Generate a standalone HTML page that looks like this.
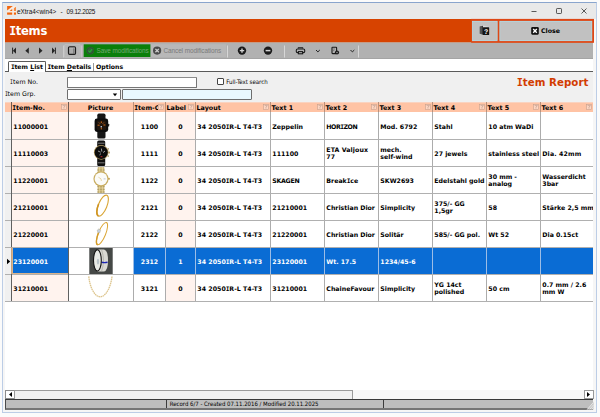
<!DOCTYPE html>
<html><head><meta charset="utf-8"><title>eXtra4 Items</title>
<style>
html,body{margin:0;padding:0}
body{width:600px;height:417px;background:#fbfbfb;position:relative;overflow:hidden;font-family:"DejaVu Sans","Liberation Sans",sans-serif;font-size:6.25px;color:#000}
div,svg{position:absolute;box-sizing:border-box}
.b{font-weight:bold}
u{text-decoration-thickness:0.5px;text-underline-offset:0.6px}
.tx{white-space:nowrap;line-height:8px}
.cell{overflow:hidden}
.cell .tx{font-weight:bold;line-height:7px}
.I{font-family:"DejaVu Sans Mono","Liberation Mono",monospace;margin:0 -0.034em 0 -0.022em}
.J{font-family:"DejaVu Sans Mono","Liberation Mono",monospace;display:inline-block;transform:scaleX(0.75);transform-origin:0 0;margin:0 -0.17em 0 -0.02em}
.seg{font-family:"Liberation Sans","DejaVu Sans",sans-serif}
.tah{font-family:"DejaVu Sans Condensed","DejaVu Sans","Liberation Sans",sans-serif}
</style></head><body>

<div style="left:2px;top:2px;width:595px;height:411px;border:1px solid #bccde6;border-top-color:#8aa5cd;background:#f6f6f6"></div>
<div style="left:3px;top:3px;width:593px;height:16px;background:#e9e9e9"></div>
<svg style="left:6.6px;top:6.2px" width="9.2" height="8.8" viewBox="0 0 9.2 8.8"><rect width="9.2" height="8.8" rx="0.5" fill="#f6ece4"/><path d="M0.1 0.1 H5.8 L0.1 4.6 Z" fill="#f2650e"/><path d="M2.6 5 L5.2 2.9 V5 Z" fill="#f2650e"/><path d="M6.9 2.2 L9.1 0.6 V5 H6.9 Z" fill="#f58a42"/><rect x="0.1" y="6.5" width="5.1" height="2.2" fill="#f2650e"/><rect x="6.9" y="6.5" width="2.2" height="2.2" fill="#f2650e"/></svg>
<div class="tx seg" style="left:17px;top:7.7px;font-size:6.35px;letter-spacing:0.01px;color:#111">eXtra4&lt;win4&gt;</div>
<div class="tx seg" style="left:60.6px;top:7.7px;font-size:6.35px;color:#111">-</div>
<div class="tx seg" style="left:66.6px;top:7.7px;font-size:6.35px;letter-spacing:-0.34px;color:#111">09.12.2025</div>
<svg style="left:525px;top:5px" width="70" height="12" viewBox="0 0 70 12"><path d="M6.5 6.5 H11.5" stroke="#333" stroke-width="0.8" fill="none"/><rect x="31.5" y="3.5" width="5" height="5" rx="0.7" stroke="#333" stroke-width="0.8" fill="none"/><path d="M56.5 3.5 L61.5 8.5 M61.5 3.5 L56.5 8.5" stroke="#333" stroke-width="0.8" fill="none"/></svg>
<div style="left:5px;top:19px;width:588px;height:23px;background:#d74300"></div>
<div style="left:5px;top:42px;width:588px;height:1px;background:#c59c87"></div>
<div class="tx b" style="left:9.6px;top:23px;font-size:11.6px;line-height:17px;color:#fff;letter-spacing:-0.25px"><span class="I">I</span>tems</div>
<svg style="left:470px;top:18px" width="125" height="26" viewBox="470 18 125 26"><rect x="471.2" y="18.9" width="122.8" height="23.9" fill="#de4716"/><rect x="472.1" y="20.9" width="25.4" height="20.2" fill="#c1c1c1"/><rect x="499.5" y="20.9" width="92.7" height="20.2" fill="#c1c1c1"/><rect x="472.5" y="21.3" width="24.6" height="19.4" fill="none" stroke="#a9e2f0" stroke-width="0.5"/><rect x="499.9" y="21.3" width="91.9" height="19.4" fill="none" stroke="#a9e2f0" stroke-width="0.5"/></svg>
<svg style="left:479px;top:25px" width="11" height="11" viewBox="0 0 11 11"><path d="M0.5 1.5 L3.8 0.6 L10.4 1.9 V10 L3.9 10.3 L0.5 9 Z" fill="#d8d8d8"/><path d="M0.7 1.6 L4 0.8 V9.8 L0.7 8.8 Z" fill="#2e2e2e"/><path d="M1.7 1.5 V9 M2.8 1.2 V9.4" stroke="#9a9a9a" stroke-width="0.4"/><rect x="3.8" y="2.2" width="6.4" height="7.8" rx="0.5" fill="#141414"/><text x="7" y="8.7" font-size="6.8" font-weight="bold" fill="#fff" text-anchor="middle" font-family="Liberation Sans, sans-serif" style="text-rendering:geometricPrecision">?</text></svg>
<svg style="left:531px;top:27px" width="8" height="8" viewBox="0 0 8 8"><rect x="0.2" y="0.1" width="7.6" height="7.6" rx="1.1" fill="#111"/><path d="M2.2 2.1 L5.8 5.7 M5.8 2.1 L2.2 5.7" stroke="#fff" stroke-width="1.4"/></svg>
<div class="tx b" style="left:541px;top:27.3px;font-size:6.3px">Close</div>
<div style="left:5px;top:43px;width:588px;height:15.5px;background:#b1b1b1;border-bottom:1px solid #a4a4a4"></div>
<svg style="left:5px;top:43px" width="370" height="16" viewBox="0 0 370 16"><g fill="#262626"><rect x="7.1" y="4.6" width="1" height="6.2"/><path d="M11 4.6 V10.8 L7.9 7.7 Z"/><path d="M23.8 4.6 V10.8 L20.3 7.7 Z"/><path d="M34 4.6 V10.8 L37.5 7.7 Z"/><path d="M47 4.6 V10.8 L50.1 7.7 Z"/><rect x="49.9" y="4.6" width="1" height="6.2"/></g><rect x="58.4" y="2.5" width="0.8" height="12" fill="#dcdcdc"/><rect x="59.6" y="1.6" width="15.6" height="12.6" rx="0.8" fill="#b6b6b6" stroke="#c8c8c8" stroke-width="0.5"/><rect x="63.5" y="3.9" width="7" height="7.4" rx="1.1" fill="#a9a9a9" stroke="#1c1c1c" stroke-width="1.2"/><path d="M68.7 4.6 V10.8" stroke="#555" stroke-width="0.6"/><path d="M64.2 5 H70" stroke="#c4c4c4" stroke-width="0.6"/><rect x="76.3" y="2.5" width="0.9" height="12" fill="#d8c4d8"/><rect x="78.7" y="1.3" width="66.7" height="12.7" fill="#0a7f0a"/><circle cx="85.2" cy="7.6" r="3.9" fill="#33633a"/><circle cx="85.2" cy="7.6" r="3.1" fill="none" stroke="#2a5230" stroke-width="0.8"/><path d="M83.4 7.7 L84.8 9.1 L87.1 6.2" stroke="#22a832" stroke-width="1.2" fill="none"/><rect x="146" y="1.3" width="75" height="12.7" fill="#b8b8b8"/><circle cx="152.1" cy="7.6" r="4.1" fill="#4a4a4a"/><path d="M150.4 5.9 L153.8 9.3 M153.8 5.9 L150.4 9.3" stroke="#cfcfcf" stroke-width="1.3"/><rect x="222" y="2.5" width="0.9" height="12" fill="#dcdcdc"/><circle cx="237" cy="7.6" r="4.2" fill="#1a1a1a"/><path d="M234.8 7.6 H239.2 M237 5.4 V9.8" stroke="#d4d4d4" stroke-width="1.4"/><circle cx="263" cy="7.6" r="4.2" fill="#1a1a1a"/><path d="M260.6 7.6 H265.4" stroke="#d4d4d4" stroke-width="1.5"/><rect x="279" y="2.5" width="0.9" height="12" fill="#dcdcdc"/><g fill="none" stroke="#1a1a1a" stroke-width="1.1"><rect x="291.3" y="6" width="8.4" height="3.6" rx="1.2"/><path d="M293.4 5.6 V4.7 H297.6 V5.6"/><rect x="293.4" y="8.6" width="4.2" height="2.2" fill="#b1b1b1"/></g><path d="M311 7 L312.9 8.9 L314.8 7" stroke="#222" stroke-width="1" fill="none"/><rect x="327" y="4.2" width="4.6" height="6.4" rx="0.6" fill="none" stroke="#1a1a1a" stroke-width="1.1"/><path d="M328.4 6 H329.6 M328.4 7.6 H329.2" stroke="#1a1a1a" stroke-width="0.6"/><circle cx="332" cy="9.5" r="2.1" fill="#1a1a1a"/><circle cx="332" cy="9.5" r="0.7" fill="#b1b1b1"/><path d="M345.5 7 L347.4 8.9 L349.3 7" stroke="#222" stroke-width="1" fill="none"/><rect x="353" y="2.5" width="0.9" height="12" fill="#dcdcdc"/></svg>
<div class="tx seg" style="left:96.6px;top:47.2px;font-size:6.4px;color:#74a874;letter-spacing:-0.09px">Save modifications</div>
<div class="tx seg" style="left:163.5px;top:47.2px;font-size:6.4px;color:#7a7a7a;letter-spacing:-0.07px">Cancel modifications</div>
<div style="left:5px;top:59px;width:588px;height:13px;background:#fff"></div>
<div style="left:5px;top:72px;width:588px;height:31px;background:#f0f0f0"></div>
<div style="left:45px;top:71px;width:548px;height:1px;background:#5a5a5a"></div>
<div style="left:5px;top:71px;width:4px;height:1px;background:#5a5a5a"></div>
<div style="left:8px;top:60.6px;width:38px;height:11.4px;background:#fff;border:1px solid #5a5a5a;border-bottom:none;border-radius:1.5px 1.5px 0 0"></div>
<div class="tx b" style="left:11px;top:63px;font-size:6.2px"><span class="I">I</span>tem <u>L</u>ist</div>
<div class="tx b" style="left:47.7px;top:63px;font-size:6.2px"><span class="I">I</span>tem <u>D</u>etails</div>
<div style="left:93px;top:63px;width:1px;height:8px;background:#999"></div>
<div class="tx b" style="left:96px;top:63px;font-size:6.2px">Options</div>
<div class="tx" style="left:10.5px;top:78.3px;font-size:6.3px;color:#000"><span class="J">I</span>tem No.</div>
<div class="tx" style="left:5px;top:89.5px;font-size:6.3px;color:#000"><span class="J">I</span>tem Grp.</div>
<div style="left:67px;top:77px;width:130px;height:11px;background:#fff;border:1px solid #767676;border-top-color:#8c8c8c;border-radius:1px"></div>
<div style="left:67px;top:89px;width:54px;height:10.5px;background:#fff;border:1px solid #6e6e6e;border-radius:1px"></div>
<svg style="left:112px;top:93px" width="6" height="4" viewBox="0 0 6 4"><path d="M0.8 0.6 H5.2 L3 3.2 Z" fill="#000"/></svg>
<div style="left:122px;top:89px;width:130px;height:10.5px;background:#e9f8fe;border:1px solid #6e6e6e;border-radius:1px"></div>
<div style="left:217px;top:78px;width:7px;height:7px;background:#fff;border:1px solid #444;border-radius:1px"></div>
<div class="tx tah" style="left:226.3px;top:77.7px;font-size:6.05px;color:#000">Full-Text search</div>
<div class="tx b" style="left:517px;top:74.2px;font-size:10.25px;line-height:16px;color:#d23c00;letter-spacing:0.06px"><span class="I">I</span>tem Report</div>
<div style="left:5px;top:102px;width:588px;height:288px;background:#fff"></div>
<div style="left:5px;top:102px;width:588px;height:10px;background:#ffc3a4;border-top:1px solid #fad3c0"></div>
<div style="left:5px;top:112px;width:6px;height:189px;background:#f0f0f0"></div>
<div style="left:11px;top:112px;width:57px;height:189px;background:#fff3ee"></div>
<div style="left:165px;top:112px;width:30px;height:189px;background:#fff3ee"></div>
<div style="left:12px;top:247px;width:581px;height:27px;background:#0a6cd4"></div>
<div style="left:69px;top:247px;width:64px;height:27px;background:#fff"></div>
<div style="left:12px;top:247px;width:57px;height:27px;border:0.7px solid #d9b38c"></div>
<div style="left:11px;top:112px;width:1px;height:189px;background:#606060"></div>
<div style="left:11px;top:102px;width:1px;height:10px;background:#6b5a52"></div>
<div style="left:68px;top:112px;width:1px;height:189px;background:#606060"></div>
<div style="left:68px;top:102px;width:1px;height:10px;background:#6b5a52"></div>
<div style="left:133px;top:112px;width:1px;height:189px;background:#acacac"></div>
<div style="left:133px;top:102px;width:1px;height:10px;background:#b8917c"></div>
<div style="left:165px;top:112px;width:1px;height:189px;background:#acacac"></div>
<div style="left:165px;top:102px;width:1px;height:10px;background:#b8917c"></div>
<div style="left:195px;top:112px;width:1px;height:189px;background:#acacac"></div>
<div style="left:195px;top:102px;width:1px;height:10px;background:#b8917c"></div>
<div style="left:270px;top:112px;width:1px;height:189px;background:#acacac"></div>
<div style="left:270px;top:102px;width:1px;height:10px;background:#b8917c"></div>
<div style="left:324px;top:112px;width:1px;height:189px;background:#acacac"></div>
<div style="left:324px;top:102px;width:1px;height:10px;background:#b8917c"></div>
<div style="left:378px;top:112px;width:1px;height:189px;background:#acacac"></div>
<div style="left:378px;top:102px;width:1px;height:10px;background:#b8917c"></div>
<div style="left:432px;top:112px;width:1px;height:189px;background:#acacac"></div>
<div style="left:432px;top:102px;width:1px;height:10px;background:#b8917c"></div>
<div style="left:486px;top:112px;width:1px;height:189px;background:#acacac"></div>
<div style="left:486px;top:102px;width:1px;height:10px;background:#b8917c"></div>
<div style="left:540px;top:112px;width:1px;height:189px;background:#acacac"></div>
<div style="left:540px;top:102px;width:1px;height:10px;background:#b8917c"></div>
<div style="left:5px;top:139px;width:588px;height:1px;background:#b0b0b0"></div>
<div style="left:5px;top:166px;width:588px;height:1px;background:#b0b0b0"></div>
<div style="left:5px;top:193px;width:588px;height:1px;background:#b0b0b0"></div>
<div style="left:5px;top:220px;width:588px;height:1px;background:#b0b0b0"></div>
<div style="left:5px;top:247px;width:588px;height:1px;background:#b0b0b0"></div>
<div style="left:5px;top:274px;width:588px;height:1px;background:#b0b0b0"></div>
<div style="left:5px;top:301px;width:588px;height:1px;background:#b0b0b0"></div>
<div style="left:11px;top:112px;width:1px;height:189px;background:#606060"></div>
<div style="left:68px;top:112px;width:1px;height:189px;background:#606060"></div>
<div style="left:133px;top:248px;width:1px;height:26px;background:#9cbde6"></div>
<div style="left:165px;top:248px;width:1px;height:26px;background:#9cbde6"></div>
<div style="left:195px;top:248px;width:1px;height:26px;background:#9cbde6"></div>
<div style="left:270px;top:248px;width:1px;height:26px;background:#9cbde6"></div>
<div style="left:324px;top:248px;width:1px;height:26px;background:#9cbde6"></div>
<div style="left:378px;top:248px;width:1px;height:26px;background:#9cbde6"></div>
<div style="left:432px;top:248px;width:1px;height:26px;background:#9cbde6"></div>
<div style="left:486px;top:248px;width:1px;height:26px;background:#9cbde6"></div>
<div style="left:540px;top:248px;width:1px;height:26px;background:#9cbde6"></div>
<div style="left:11px;top:247px;width:1px;height:27px;background:#c9a27e"></div>
<div class="cell" style="left:12px;top:102px;width:49px;height:10px"><div class="tx b" style="left:0.5px;top:1.5px;font-size:6.4px;line-height:8px"><span class="I">I</span>tem-No.</div></div>
<svg style="left:61px;top:103.5px" width="6" height="6" viewBox="0 0 6 6"><rect x="0.4" y="0.4" width="5.2" height="5.2" fill="#ffd6c2" stroke="#c9a08c" stroke-width="0.6"/><path d="M1.6 1.6 H4.4 L3 3.2 V4.6" stroke="#b29486" stroke-width="0.6" fill="none"/></svg>
<div class="tx b" style="left:68px;width:65px;top:104px;text-align:center;font-size:6.3px">Picture</div>
<div class="cell" style="left:134px;top:102px;width:24px;height:10px"><div class="tx b" style="left:0.5px;top:1.5px;font-size:6.4px;line-height:8px"><span class="I">I</span>tem-C</div></div>
<svg style="left:158px;top:103.5px" width="6" height="6" viewBox="0 0 6 6"><rect x="0.4" y="0.4" width="5.2" height="5.2" fill="#ffd6c2" stroke="#c9a08c" stroke-width="0.6"/><path d="M1.6 1.6 H4.4 L3 3.2 V4.6" stroke="#b29486" stroke-width="0.6" fill="none"/></svg>
<div class="cell" style="left:166px;top:102px;width:22px;height:10px"><div class="tx b" style="left:0.5px;top:1.5px;font-size:6.4px;line-height:8px">Label</div></div>
<svg style="left:188px;top:103.5px" width="6" height="6" viewBox="0 0 6 6"><rect x="0.4" y="0.4" width="5.2" height="5.2" fill="#ffd6c2" stroke="#c9a08c" stroke-width="0.6"/><path d="M1.6 1.6 H4.4 L3 3.2 V4.6" stroke="#b29486" stroke-width="0.6" fill="none"/></svg>
<div class="cell" style="left:196px;top:102px;width:67px;height:10px"><div class="tx b" style="left:0.5px;top:1.5px;font-size:6.4px;line-height:8px">Layout</div></div>
<svg style="left:263px;top:103.5px" width="6" height="6" viewBox="0 0 6 6"><rect x="0.4" y="0.4" width="5.2" height="5.2" fill="#ffd6c2" stroke="#c9a08c" stroke-width="0.6"/><path d="M1.6 1.6 H4.4 L3 3.2 V4.6" stroke="#b29486" stroke-width="0.6" fill="none"/></svg>
<div class="cell" style="left:271px;top:102px;width:46px;height:10px"><div class="tx b" style="left:0.5px;top:1.5px;font-size:6.4px;line-height:8px">Text 1</div></div>
<svg style="left:317px;top:103.5px" width="6" height="6" viewBox="0 0 6 6"><rect x="0.4" y="0.4" width="5.2" height="5.2" fill="#ffd6c2" stroke="#c9a08c" stroke-width="0.6"/><path d="M1.6 1.6 H4.4 L3 3.2 V4.6" stroke="#b29486" stroke-width="0.6" fill="none"/></svg>
<div class="cell" style="left:325px;top:102px;width:46px;height:10px"><div class="tx b" style="left:0.5px;top:1.5px;font-size:6.4px;line-height:8px">Text 2</div></div>
<svg style="left:371px;top:103.5px" width="6" height="6" viewBox="0 0 6 6"><rect x="0.4" y="0.4" width="5.2" height="5.2" fill="#ffd6c2" stroke="#c9a08c" stroke-width="0.6"/><path d="M1.6 1.6 H4.4 L3 3.2 V4.6" stroke="#b29486" stroke-width="0.6" fill="none"/></svg>
<div class="cell" style="left:379px;top:102px;width:46px;height:10px"><div class="tx b" style="left:0.5px;top:1.5px;font-size:6.4px;line-height:8px">Text 3</div></div>
<svg style="left:425px;top:103.5px" width="6" height="6" viewBox="0 0 6 6"><rect x="0.4" y="0.4" width="5.2" height="5.2" fill="#ffd6c2" stroke="#c9a08c" stroke-width="0.6"/><path d="M1.6 1.6 H4.4 L3 3.2 V4.6" stroke="#b29486" stroke-width="0.6" fill="none"/></svg>
<div class="cell" style="left:433px;top:102px;width:46px;height:10px"><div class="tx b" style="left:0.5px;top:1.5px;font-size:6.4px;line-height:8px">Text 4</div></div>
<svg style="left:479px;top:103.5px" width="6" height="6" viewBox="0 0 6 6"><rect x="0.4" y="0.4" width="5.2" height="5.2" fill="#ffd6c2" stroke="#c9a08c" stroke-width="0.6"/><path d="M1.6 1.6 H4.4 L3 3.2 V4.6" stroke="#b29486" stroke-width="0.6" fill="none"/></svg>
<div class="cell" style="left:487px;top:102px;width:46px;height:10px"><div class="tx b" style="left:0.5px;top:1.5px;font-size:6.4px;line-height:8px">Text 5</div></div>
<svg style="left:533px;top:103.5px" width="6" height="6" viewBox="0 0 6 6"><rect x="0.4" y="0.4" width="5.2" height="5.2" fill="#ffd6c2" stroke="#c9a08c" stroke-width="0.6"/><path d="M1.6 1.6 H4.4 L3 3.2 V4.6" stroke="#b29486" stroke-width="0.6" fill="none"/></svg>
<div class="cell" style="left:541px;top:102px;width:45px;height:10px"><div class="tx b" style="left:0.5px;top:1.5px;font-size:6.4px;line-height:8px">Text 6</div></div>
<svg style="left:586px;top:103.5px" width="6" height="6" viewBox="0 0 6 6"><rect x="0.4" y="0.4" width="5.2" height="5.2" fill="#ffd6c2" stroke="#c9a08c" stroke-width="0.6"/><path d="M1.6 1.6 H4.4 L3 3.2 V4.6" stroke="#b29486" stroke-width="0.6" fill="none"/></svg>
<div class="cell" style="left:12px;top:112px;width:56px;height:27px"><div class="tx" style="left:1.3px;top:11.15px;color:#000">11000001</div></div>
<div class="cell" style="left:134px;top:112px;width:31px;height:27px"><div class="tx" style="left:0;width:100%;text-align:center;top:11.15px;color:#000">1100</div></div>
<div class="cell" style="left:166px;top:112px;width:29px;height:27px"><div class="tx" style="left:0;width:100%;text-align:center;top:11.15px;color:#000">0</div></div>
<div class="cell" style="left:196px;top:112px;width:74px;height:27px"><div class="tx" style="left:1.3px;top:11.15px;color:#000;letter-spacing:0.04px">34 2050<span class="I">I</span>R-L T4-T3</div></div>
<div class="cell" style="left:271px;top:112px;width:53px;height:27px"><div class="tx" style="left:1.3px;top:11.15px;color:#000">Zeppelin</div></div>
<div class="cell" style="left:325px;top:112px;width:53px;height:27px"><div class="tx" style="left:1.3px;top:11.15px;color:#000;letter-spacing:-0.42px">HOR<span class="I">I</span>ZON</div></div>
<div class="cell" style="left:379px;top:112px;width:53px;height:27px"><div class="tx" style="left:1.3px;top:11.15px;color:#000">Mod. 6792</div></div>
<div class="cell" style="left:433px;top:112px;width:53px;height:27px"><div class="tx" style="left:1.3px;top:11.15px;color:#000">Stahl</div></div>
<div class="cell" style="left:487px;top:112px;width:53px;height:27px"><div class="tx" style="left:1.3px;top:11.15px;color:#000">10 atm WaDi</div></div>
<div class="cell" style="left:12px;top:140px;width:56px;height:26px"><div class="tx" style="left:1.3px;top:9.95px;color:#000">11110003</div></div>
<div class="cell" style="left:134px;top:140px;width:31px;height:26px"><div class="tx" style="left:0;width:100%;text-align:center;top:9.95px;color:#000">1111</div></div>
<div class="cell" style="left:166px;top:140px;width:29px;height:26px"><div class="tx" style="left:0;width:100%;text-align:center;top:9.95px;color:#000">0</div></div>
<div class="cell" style="left:196px;top:140px;width:74px;height:26px"><div class="tx" style="left:1.3px;top:9.95px;color:#000;letter-spacing:0.04px">34 2050<span class="I">I</span>R-L T4-T3</div></div>
<div class="cell" style="left:271px;top:140px;width:53px;height:26px"><div class="tx" style="left:1.3px;top:9.95px;color:#000">111100</div></div>
<div class="cell" style="left:325px;top:140px;width:53px;height:26px"><div class="tx" style="left:1.3px;top:6.15px;color:#000;letter-spacing:0.09px">ETA Valjoux<br>77</div></div>
<div class="cell" style="left:379px;top:140px;width:53px;height:26px"><div class="tx" style="left:1.3px;top:6.15px;color:#000">mech.<br>self-wind</div></div>
<div class="cell" style="left:433px;top:140px;width:53px;height:26px"><div class="tx" style="left:1.3px;top:9.95px;color:#000">27 jewels</div></div>
<div class="cell" style="left:487px;top:140px;width:53px;height:26px"><div class="tx" style="left:1.3px;top:9.95px;color:#000">stainless steel</div></div>
<div class="cell" style="left:541px;top:140px;width:52px;height:26px"><div class="tx" style="left:1.3px;top:9.95px;color:#000;letter-spacing:0.14px">Dia. 42mm</div></div>
<div class="cell" style="left:12px;top:167px;width:56px;height:26px"><div class="tx" style="left:1.3px;top:9.95px;color:#000">11220001</div></div>
<div class="cell" style="left:134px;top:167px;width:31px;height:26px"><div class="tx" style="left:0;width:100%;text-align:center;top:9.95px;color:#000">1122</div></div>
<div class="cell" style="left:166px;top:167px;width:29px;height:26px"><div class="tx" style="left:0;width:100%;text-align:center;top:9.95px;color:#000">0</div></div>
<div class="cell" style="left:196px;top:167px;width:74px;height:26px"><div class="tx" style="left:1.3px;top:9.95px;color:#000;letter-spacing:0.04px">34 2050<span class="I">I</span>R-L T4-T3</div></div>
<div class="cell" style="left:271px;top:167px;width:53px;height:26px"><div class="tx" style="left:1.3px;top:9.95px;color:#000;letter-spacing:-0.3px">SKAGEN</div></div>
<div class="cell" style="left:325px;top:167px;width:53px;height:26px"><div class="tx" style="left:1.3px;top:9.95px;color:#000">Break<span class="I">I</span>ce</div></div>
<div class="cell" style="left:379px;top:167px;width:53px;height:26px"><div class="tx" style="left:1.3px;top:9.95px;color:#000">SKW2693</div></div>
<div class="cell" style="left:433px;top:167px;width:53px;height:26px"><div class="tx" style="left:1.3px;top:9.95px;color:#000">Edelstahl gold</div></div>
<div class="cell" style="left:487px;top:167px;width:53px;height:26px"><div class="tx" style="left:1.3px;top:6.15px;color:#000">30 mm -<br>analog</div></div>
<div class="cell" style="left:541px;top:167px;width:52px;height:26px"><div class="tx" style="left:1.3px;top:6.15px;color:#000">Wasserdicht<br>3bar</div></div>
<div class="cell" style="left:12px;top:194px;width:56px;height:26px"><div class="tx" style="left:1.3px;top:9.95px;color:#000">21210001</div></div>
<div class="cell" style="left:134px;top:194px;width:31px;height:26px"><div class="tx" style="left:0;width:100%;text-align:center;top:9.95px;color:#000">2121</div></div>
<div class="cell" style="left:166px;top:194px;width:29px;height:26px"><div class="tx" style="left:0;width:100%;text-align:center;top:9.95px;color:#000">0</div></div>
<div class="cell" style="left:196px;top:194px;width:74px;height:26px"><div class="tx" style="left:1.3px;top:9.95px;color:#000;letter-spacing:0.04px">34 2050<span class="I">I</span>R-L T4-T3</div></div>
<div class="cell" style="left:271px;top:194px;width:53px;height:26px"><div class="tx" style="left:1.3px;top:9.95px;color:#000">21210001</div></div>
<div class="cell" style="left:325px;top:194px;width:53px;height:26px"><div class="tx" style="left:1.3px;top:9.95px;color:#000">Christian Dior</div></div>
<div class="cell" style="left:379px;top:194px;width:53px;height:26px"><div class="tx" style="left:1.3px;top:9.95px;color:#000">Simplicity</div></div>
<div class="cell" style="left:433px;top:194px;width:53px;height:26px"><div class="tx" style="left:1.3px;top:6.15px;color:#000">375/- GG<br>1,5gr</div></div>
<div class="cell" style="left:487px;top:194px;width:53px;height:26px"><div class="tx" style="left:1.3px;top:9.95px;color:#000">58</div></div>
<div class="cell" style="left:541px;top:194px;width:52px;height:26px"><div class="tx" style="left:1.3px;top:9.95px;color:#000">Stärke 2,5 mm</div></div>
<div class="cell" style="left:12px;top:221px;width:56px;height:26px"><div class="tx" style="left:1.3px;top:9.95px;color:#000">21220001</div></div>
<div class="cell" style="left:134px;top:221px;width:31px;height:26px"><div class="tx" style="left:0;width:100%;text-align:center;top:9.95px;color:#000">2122</div></div>
<div class="cell" style="left:166px;top:221px;width:29px;height:26px"><div class="tx" style="left:0;width:100%;text-align:center;top:9.95px;color:#000">0</div></div>
<div class="cell" style="left:196px;top:221px;width:74px;height:26px"><div class="tx" style="left:1.3px;top:9.95px;color:#000;letter-spacing:0.04px">34 2050<span class="I">I</span>R-L T4-T3</div></div>
<div class="cell" style="left:271px;top:221px;width:53px;height:26px"><div class="tx" style="left:1.3px;top:9.95px;color:#000">21220001</div></div>
<div class="cell" style="left:325px;top:221px;width:53px;height:26px"><div class="tx" style="left:1.3px;top:9.95px;color:#000">Christian Dior</div></div>
<div class="cell" style="left:379px;top:221px;width:53px;height:26px"><div class="tx" style="left:1.3px;top:9.95px;color:#000">Solitär</div></div>
<div class="cell" style="left:433px;top:221px;width:53px;height:26px"><div class="tx" style="left:1.3px;top:9.95px;color:#000">585/- GG pol.</div></div>
<div class="cell" style="left:487px;top:221px;width:53px;height:26px"><div class="tx" style="left:1.3px;top:9.95px;color:#000">Wt 52</div></div>
<div class="cell" style="left:541px;top:221px;width:52px;height:26px"><div class="tx" style="left:1.3px;top:9.95px;color:#000">Dia 0.15ct</div></div>
<div class="cell" style="left:12px;top:248px;width:56px;height:26px"><div class="tx" style="left:1.3px;top:9.95px;color:#fff">23120001</div></div>
<div class="cell" style="left:134px;top:248px;width:31px;height:26px"><div class="tx" style="left:0;width:100%;text-align:center;top:9.95px;color:#fff">2312</div></div>
<div class="cell" style="left:166px;top:248px;width:29px;height:26px"><div class="tx" style="left:0;width:100%;text-align:center;top:9.95px;color:#fff">1</div></div>
<div class="cell" style="left:196px;top:248px;width:74px;height:26px"><div class="tx" style="left:1.3px;top:9.95px;color:#fff;letter-spacing:0.04px">34 2050<span class="I">I</span>R-L T4-T3</div></div>
<div class="cell" style="left:271px;top:248px;width:53px;height:26px"><div class="tx" style="left:1.3px;top:9.95px;color:#fff">23120001</div></div>
<div class="cell" style="left:325px;top:248px;width:53px;height:26px"><div class="tx" style="left:1.3px;top:9.95px;color:#fff">Wt. 17.5</div></div>
<div class="cell" style="left:379px;top:248px;width:53px;height:26px"><div class="tx" style="left:1.3px;top:9.95px;color:#fff">1234/45-6</div></div>
<div class="cell" style="left:12px;top:275px;width:56px;height:26px"><div class="tx" style="left:1.3px;top:9.95px;color:#000">31210001</div></div>
<div class="cell" style="left:134px;top:275px;width:31px;height:26px"><div class="tx" style="left:0;width:100%;text-align:center;top:9.95px;color:#000">3121</div></div>
<div class="cell" style="left:166px;top:275px;width:29px;height:26px"><div class="tx" style="left:0;width:100%;text-align:center;top:9.95px;color:#000">0</div></div>
<div class="cell" style="left:196px;top:275px;width:74px;height:26px"><div class="tx" style="left:1.3px;top:9.95px;color:#000;letter-spacing:0.04px">34 2050<span class="I">I</span>R-L T4-T3</div></div>
<div class="cell" style="left:271px;top:275px;width:53px;height:26px"><div class="tx" style="left:1.3px;top:9.95px;color:#000">31210001</div></div>
<div class="cell" style="left:325px;top:275px;width:53px;height:26px"><div class="tx" style="left:1.3px;top:9.95px;color:#000">ChaineFavour</div></div>
<div class="cell" style="left:379px;top:275px;width:53px;height:26px"><div class="tx" style="left:1.3px;top:9.95px;color:#000">Simplicity</div></div>
<div class="cell" style="left:433px;top:275px;width:53px;height:26px"><div class="tx" style="left:1.3px;top:6.15px;color:#000">YG 14ct<br>polished</div></div>
<div class="cell" style="left:487px;top:275px;width:53px;height:26px"><div class="tx" style="left:1.3px;top:9.95px;color:#000">50 cm</div></div>
<div class="cell" style="left:541px;top:275px;width:52px;height:26px"><div class="tx" style="left:1.3px;top:6.15px;color:#000">0.7 mm / 2.6<br>mm W</div></div>
<svg style="left:6px;top:257.5px" width="5" height="7" viewBox="0 0 5 7"><path d="M1 0.8 L4.2 3.5 L1 6.2 Z" fill="#000"/></svg>
<svg style="left:68px;top:110px" width="66" height="192" viewBox="68 110 66 192"><defs><clipPath id="c0"><rect x="69" y="112" width="64" height="27"/></clipPath><clipPath id="c1"><rect x="69" y="140" width="64" height="26"/></clipPath><clipPath id="c2"><rect x="69" y="167" width="64" height="26"/></clipPath><clipPath id="c3"><rect x="69" y="194" width="64" height="26"/></clipPath><clipPath id="c4"><rect x="69" y="221" width="64" height="26"/></clipPath><clipPath id="c5"><rect x="69" y="248" width="64" height="26"/></clipPath><clipPath id="c6"><rect x="69" y="275" width="64" height="26"/></clipPath></defs>
<!-- watch 1 : black square chrono --><g clip-path="url(#c0)">
<g>
<rect x="97.3" y="113.6" width="8.2" height="25" rx="1.6" fill="#161616"/>
<rect x="94.6" y="118.6" width="13.6" height="13.4" rx="2.4" fill="#0d0d0d"/>
<rect x="108" y="123.8" width="1.2" height="2.6" rx="0.5" fill="#1c1c1c"/>
<rect x="96.6" y="120.6" width="9.6" height="9.4" rx="1.4" fill="#20160f"/>
<path d="M97.6 125.2 h2 M103.4 125 h2 M101.3 121.4 v1.6 M101.3 127.6 v1.8 M99 122.6 l1 1 M103.8 122.6 l-1 1" stroke="#e0701a" stroke-width="0.9" fill="none"/>
<rect x="100.6" y="126" width="1.4" height="1.4" fill="#b8c4d8"/>
</g>
</g><!-- watch 2 : round black chrono --><g clip-path="url(#c1)">
<g>
<rect x="97.2" y="140.4" width="8" height="25.8" rx="1.6" fill="#101010"/>
<path d="M97.8 143.2 h6.8 M97.8 162.8 h6.8" stroke="#e8e8e8" stroke-width="0.5"/>
<circle cx="101.2" cy="152.4" r="7.3" fill="#b59a5e"/>
<circle cx="101.2" cy="152.4" r="6.6" fill="#0c0c0c"/>
<rect x="108.3" y="151.4" width="1.6" height="2" rx="0.5" fill="#b59a5e"/>
<rect x="107.6" y="148.2" width="1.2" height="1.4" fill="#9a854f"/>
<rect x="107.6" y="155.4" width="1.2" height="1.4" fill="#9a854f"/>
<path d="M98 151 l2.6 1.2 M101.4 148.6 l0.4 3 M103 152.6 l2 -1.6 M99.4 155 l1.6 -1.4" stroke="#d8d8d8" stroke-width="0.7" fill="none"/>
<rect x="100.6" y="156.2" width="1.8" height="1" fill="#c02020"/>
</g>
</g><!-- watch 3 : gold with white dial --><g clip-path="url(#c2)">
<g>
<rect x="97.6" y="167" width="6.8" height="27" rx="0.8" fill="#cfbb82"/>
<path d="M97.2 170 h7.6 M97.2 172.6 h7.6 M97.2 186.6 h7.6 M97.2 189.4 h7.6 M97.2 192 h7.6" stroke="#a08a4c" stroke-width="0.6"/>
<path d="M99.6 167 v27 M102.4 167 v27" stroke="#f2e2a8" stroke-width="0.6"/>
<circle cx="101" cy="178.8" r="7.6" fill="#c8ad62"/>
<circle cx="101" cy="178.8" r="6.4" fill="#fbfbf8"/>
<rect x="108.4" y="177.8" width="1.2" height="2" rx="0.4" fill="#b8922e"/>
<rect x="103.6" y="178.2" width="2" height="1.3" fill="#ccd3e2"/>
<path d="M101 178.8 l-2.6 -1.6 M101 178.8 l0.4 2.2" stroke="#d2b25e" stroke-width="0.5"/>
</g>
</g><!-- ring 1 --><g clip-path="url(#c3)">
<g transform="rotate(22 102.6 205.6)">
<ellipse cx="102.6" cy="205.6" rx="4.3" ry="11.2" fill="none" stroke="#d9a534" stroke-width="1.1"/>
<path d="M98.3 205.6 A4.3 11.2 0 0 0 102.6 216.8" fill="none" stroke="#cf9422" stroke-width="1.6"/>
</g>
</g><!-- ring 2 with stone --><g clip-path="url(#c4)">
<g transform="rotate(22 102 233.6)">
<ellipse cx="102" cy="233.6" rx="3.6" ry="12" fill="none" stroke="#dba636" stroke-width="1"/>
<path d="M98.4 233.6 A3.6 12 0 0 0 102 245.6" fill="none" stroke="#d39a26" stroke-width="1.4"/>
</g>
<path d="M97.2 230.2 L99 228.8 L100.6 230.6 L99.6 233 L97.8 232.6 Z" fill="#c6cfdc" stroke="#a9a38c" stroke-width="0.4"/>
</g><!-- ring 3 on dark bg --><g clip-path="url(#c5)">
<g>
<rect x="89.3" y="247.6" width="23.4" height="26.8" fill="#454846"/>
<path d="M97.4 249.6 H104 Q108 250.4 108 260.4 Q108 270.6 104 271.4 H97.4 Z" fill="#d9d9d3"/>
<path d="M101.6 249.8 Q105.4 260.4 101.6 271.2" stroke="#a8a8a0" stroke-width="0.7" fill="none"/>
<path d="M101.2 262.2 Q104.6 263.2 107.6 262.2" stroke="#1a24b4" stroke-width="1.3" fill="none"/>
<ellipse cx="97.4" cy="260.4" rx="3.9" ry="10.6" fill="#e9ebe6" stroke="#141414" stroke-width="1.1"/>
<ellipse cx="98" cy="261.6" rx="1.2" ry="2.8" fill="#b9c3c8"/>
</g>
</g><!-- necklace --><g clip-path="url(#c6)">
<path d="M88.8 276.4 C89.6 286 94 296.6 100.2 296.8 C106.4 296.6 111 286 112 276.4" fill="none" stroke="#dcc48c" stroke-width="1.3" stroke-dasharray="1.6 0.5"/>
</g></svg>

<div style="left:5px;top:390px;width:588px;height:9px;background:#f7f7f7"></div>
<div style="left:5px;top:390px;width:10px;height:9.4px;background:#fff;border:1px solid #8c8c8c"></div>
<svg style="left:7.6px;top:392px" width="5" height="5" viewBox="0 0 5 5"><path d="M4 0 V5 L1 2.5 Z" fill="#000"/></svg>
<div style="left:14px;top:390px;width:338.5px;height:9px;background:#f0f0f0;border:1px solid #9a9a9a;border-bottom:none"></div>
<div style="left:584px;top:390px;width:9.5px;height:9.4px;background:#fff;border:1px solid #999"></div>
<svg style="left:586.4px;top:392px" width="5" height="5" viewBox="0 0 5 5"><path d="M1 0 V5 L4 2.5 Z" fill="#000"/></svg>
<div style="left:5px;top:399px;width:588px;height:10.5px;background:#bebebe;border-top:1px solid #383838;border-left:1px solid #4a4a4a;border-bottom:2px solid #767676"></div>
<div style="left:166px;top:400px;width:1px;height:8px;background:#3c3c3c"></div>
<div style="left:383px;top:400px;width:1px;height:8px;background:#3c3c3c"></div>
<div class="tx tah" style="left:169.8px;top:399.9px;font-size:6px;letter-spacing:-0.01px">Record 6/7 - Created 07.11.2016 / Modified 20.11.2025</div>
<svg style="left:586px;top:401px" width="8" height="9" viewBox="0 0 8 9"><path d="M7.6 0.4 V8.6 H0.6 Z" fill="#c6c6c6"/><path d="M7.4 1.4 L1.4 8.4 M7.4 4 L3.8 8.4 M7.4 6.4 L5.8 8.4" stroke="#f2f2f2" stroke-width="0.7"/></svg>
</body></html>
